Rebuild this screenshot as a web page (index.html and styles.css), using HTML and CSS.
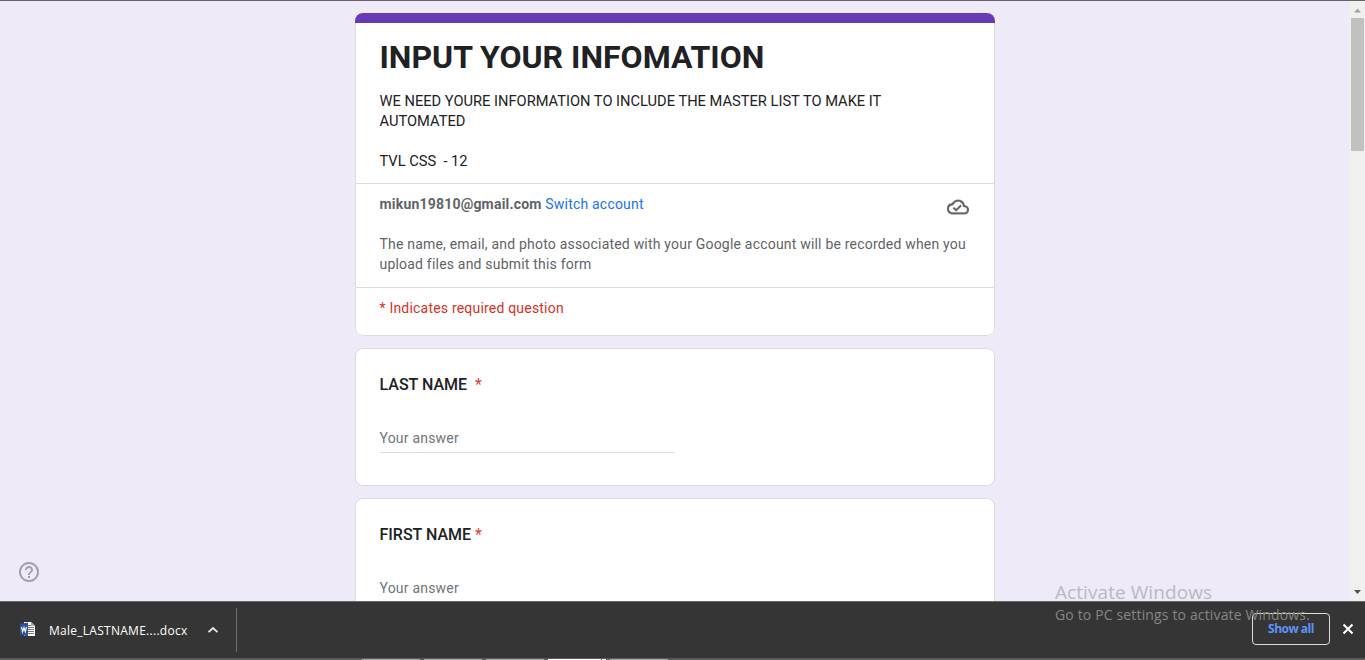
FILE: index.html
```html
<!DOCTYPE html>
<html lang="en">
<head>
<meta charset="utf-8">
<title>INPUT YOUR INFOMATION</title>
<link rel="stylesheet" href="styles.css">
</head>
<body>
<div class="window">
  <div class="viewport">
    <main class="page">
      <section class="card header-card">
        <div class="accent"></div>
        <div class="intro">
          <h1 class="title"><span>INPUT YOUR INFOMATION</span></h1>
          <p class="description">WE NEED YOURE INFORMATION TO INCLUDE THE MASTER LIST TO MAKE IT
AUTOMATED

TVL CSS  - 12</p>
        </div>
        <div class="account">
          <div class="account-row">
            <div><strong class="email">mikun19810@gmail.com</strong> <a class="switch">Switch account</a></div>
            <svg class="cloud" width="22" height="22" viewBox="0 0 24 24"><path fill="#5f6368" stroke="#5f6368" stroke-width=".3" d="M19.35 10.04A7.49 7.49 0 0 0 12 4C9.11 4 6.6 5.64 5.35 8.04A5.994 5.994 0 0 0 0 14c0 3.31 2.69 6 6 6h13c2.76 0 5-2.24 5-5 0-2.64-2.05-4.78-4.65-4.96zM19 18H6c-2.21 0-4-1.79-4-4 0-2.05 1.53-3.76 3.56-3.97l1.07-.11.5-.95A5.469 5.469 0 0 1 12 6c2.62 0 4.88 1.86 5.39 4.43l.3 1.5 1.53.11A2.98 2.98 0 0 1 22 15c0 1.65-1.35 3-3 3zm-9-3.82l-2.09-2.09L6.5 13.5 10 17l6.01-6.01-1.41-1.41z"/></svg>
          </div>
          <p class="notice">The name, email, and photo associated with your Google account will be recorded when you<br>upload files and submit this form</p>
        </div>
        <div class="required-note">* Indicates required question</div>
      </section>
      <section class="card question">
        <h2 class="label">LAST NAME&nbsp; <span class="star">*</span></h2>
        <div class="answer">Your answer</div>
      </section>
      <section class="card question">
        <h2 class="label">FIRST NAME <span class="star">*</span></h2>
        <div class="answer">Your answer</div>
      </section>
    </main>
    <div class="scrollbar">
      <svg class="arrow" width="16" height="17" viewBox="0 0 16 17"><path fill="#a3a3a3" d="M5 11.500h7L8.500 7.500z"/></svg>
      <div class="thumb"></div>
      <svg class="arrow" width="16" height="17" viewBox="0 0 16 17"><path fill="#505050" d="M5 6h7L8.500 10z"/></svg>
    </div>
  </div>
  <div class="downloads">
    <div class="file">
      <svg class="word" width="15" height="15" viewBox="0 0 15 15"><path fill="#fff" d="M4 0h7l4 4v10H4z"/><path fill="#aaa" d="M11 0l4 4h-4z"/><path stroke="#777" d="M8 3.500h3M8 5.500h6M8 7.500h6M8 9.500h6M8 11.500h6"/><path fill="#2b579a" d="M0 2l8-1.500v14L0 12.500z"/><path fill="none" stroke="#fff" stroke-width="1.100" d="M1.500 5l1.100 4.700L4 5.500l1.300 4.200L6.500 5"/></svg>
      <span class="filename">Male_LASTNAME....docx</span>
      <svg class="chevron" width="12" height="8" viewBox="0 0 12 8"><path fill="none" stroke="#e8e8e8" stroke-width="1.800" d="M1.500 6.200L6 2l4.500 4.200"/></svg>
    </div>
    <div class="actions">
      <button class="show-all">Show all</button>
      <svg width="12" height="12" viewBox="0 0 12 12"><path stroke="#fff" stroke-width="2" d="M1.500 1.500l9 9M10.500 1.500l-9 9"/></svg>
    </div>
  </div>
  <div class="taskbar">
    <i class="task"></i><i class="task"></i><i class="task"></i><i class="task active"></i><i class="task sliver"></i><i class="task last"></i>
  </div>
</div>
<svg class="help" width="24" height="24" viewBox="0 0 24 24"><path fill="#a19da9" d="M11 18h2v-2h-2v2zm1-16C6.480 2 2 6.480 2 12s4.480 10 10 10 10-4.480 10-10S17.520 2 12 2zm0 18c-4.410 0-8-3.590-8-8s3.590-8 8-8 8 3.590 8 8-3.590 8-8 8zm0-14c-2.210 0-4 1.790-4 4h2c0-1.100.9-2 2-2s2 .9 2 2c0 2-3 1.750-3 5h2c0-2.250 3-2.500 3-5 0-2.210-1.790-4-4-4z"/></svg>
<div class="watermark">
  <div class="wm-title"><span>Activate Windows</span></div>
  <div class="wm-text"><span>Go to PC settings to activate Windows.</span></div>
</div>
</body>
</html>
```
FILE: styles.css
```css
* { box-sizing: border-box; }
body { margin: 0; overflow: hidden; font-family: Roboto, "Liberation Sans", sans-serif; }
h1, h2, p { margin: 0; }
svg { display: block; flex: none; }

.window { display: flex; flex-direction: column; height: 660px; border-top: 1px solid #67616b; }
.viewport { display: flex; height: 600px; overflow: hidden; background: #eeeaf8; }
.page { flex: 1; display: flex; flex-direction: column; gap: 12px; padding: 12px 0 0 355px; }
.card { flex: none; width: 640px; background: #fff; border: 1px solid #dadce0; border-radius: 8px; overflow: hidden; }

.header-card { display: flex; flex-direction: column; height: 323px; border: 0; }
.accent { height: 10px; background: #673ab7; }
.intro, .account, .required-note { border: 0 solid #dadce0; border-width: 0 1px; padding-left: 23.5px; padding-right: 24px; }
.intro { height: 160px; padding-top: 13px; }
.title { font-size: 32px; line-height: 43px; font-weight: 700; color: #202124; }
.description { padding-top: 12px; font-size: 14.667px; line-height: 20px; color: #202124; white-space: pre; }
.account { height: 104px; padding-top: 10px; border-top-width: 1px; font-size: 14px; line-height: 20px; letter-spacing: 0.2px; color: #5f6368; }
.account-row { display: flex; justify-content: space-between; height: 40px; }
.cloud { margin: 2px 1px 0 0; }
.email { font-weight: 700; }
.switch { color: #1a73e8; }
.required-note { flex: 1; padding-top: 10px; border-width: 1px; border-radius: 0 0 8px 8px; font-size: 14px; line-height: 20px; letter-spacing: 0.2px; color: #d93025; }

.question { height: 138px; padding: 24px 24px 0 23.5px; }
.label { height: 53px; font-size: 16px; line-height: 24px; font-weight: 500; color: #202124; }
.star { font-weight: 400; color: #db4437; }
.answer { width: 295px; height: 27px; font-size: 14px; line-height: 24px; letter-spacing: 0.2px; color: #70757a; border-bottom: 1px solid #dadce0; }

.scrollbar { width: 16px; display: flex; flex-direction: column; background: #f0f0f0; }
.thumb { width: 13px; height: 133px; margin: 0 0 433px 2px; flex: none; background: #c1c1c1; }

.downloads { display: flex; justify-content: space-between; height: 57px; background: #353535; border-top: 1px solid #67666b; }
.file { display: flex; align-items: center; width: 237px; height: 44px; margin-top: 6px; padding-left: 20px; border-right: 1px solid #707070; }
.word { margin-top: -1px; }
.filename { width: 158px; margin: 2px 0 0 14px; font: 12px/18px "Open Sans", sans-serif; letter-spacing: 0.27px; color: #fff; white-space: nowrap; }
.actions { display: flex; gap: 12px; align-items: center; height: 32px; margin: 11px 11px 0 0; }
.show-all { width: 78px; height: 32px; padding: 0; border: 1px solid #dadce0; border-radius: 4px; background: none; color: #5c94f8; font: 700 12px/18px "Open Sans", sans-serif; letter-spacing: -0.5px; }

.taskbar { display: flex; gap: 4px; height: 2px; padding: 1px 0 0 362px; background: #5d595b; }
.task { width: 58px; height: 1px; background: #aaa6a8; }
.active { width: 53px; background: #fff; }
.sliver { width: 4px; margin-left: -3px; background: #fff; }

.help { position: absolute; left: 17px; top: 560px; }
.watermark { position: absolute; left: 1055px; top: 579px; font-family: "Open Sans", sans-serif; white-space: nowrap; }
.wm-title { font-size: 19px; line-height: 26px; letter-spacing: 0.07px; color: #bbb8c1; }
.wm-text { font-size: 14px; line-height: 20px; letter-spacing: 0.15px; color: #858585; }
```
